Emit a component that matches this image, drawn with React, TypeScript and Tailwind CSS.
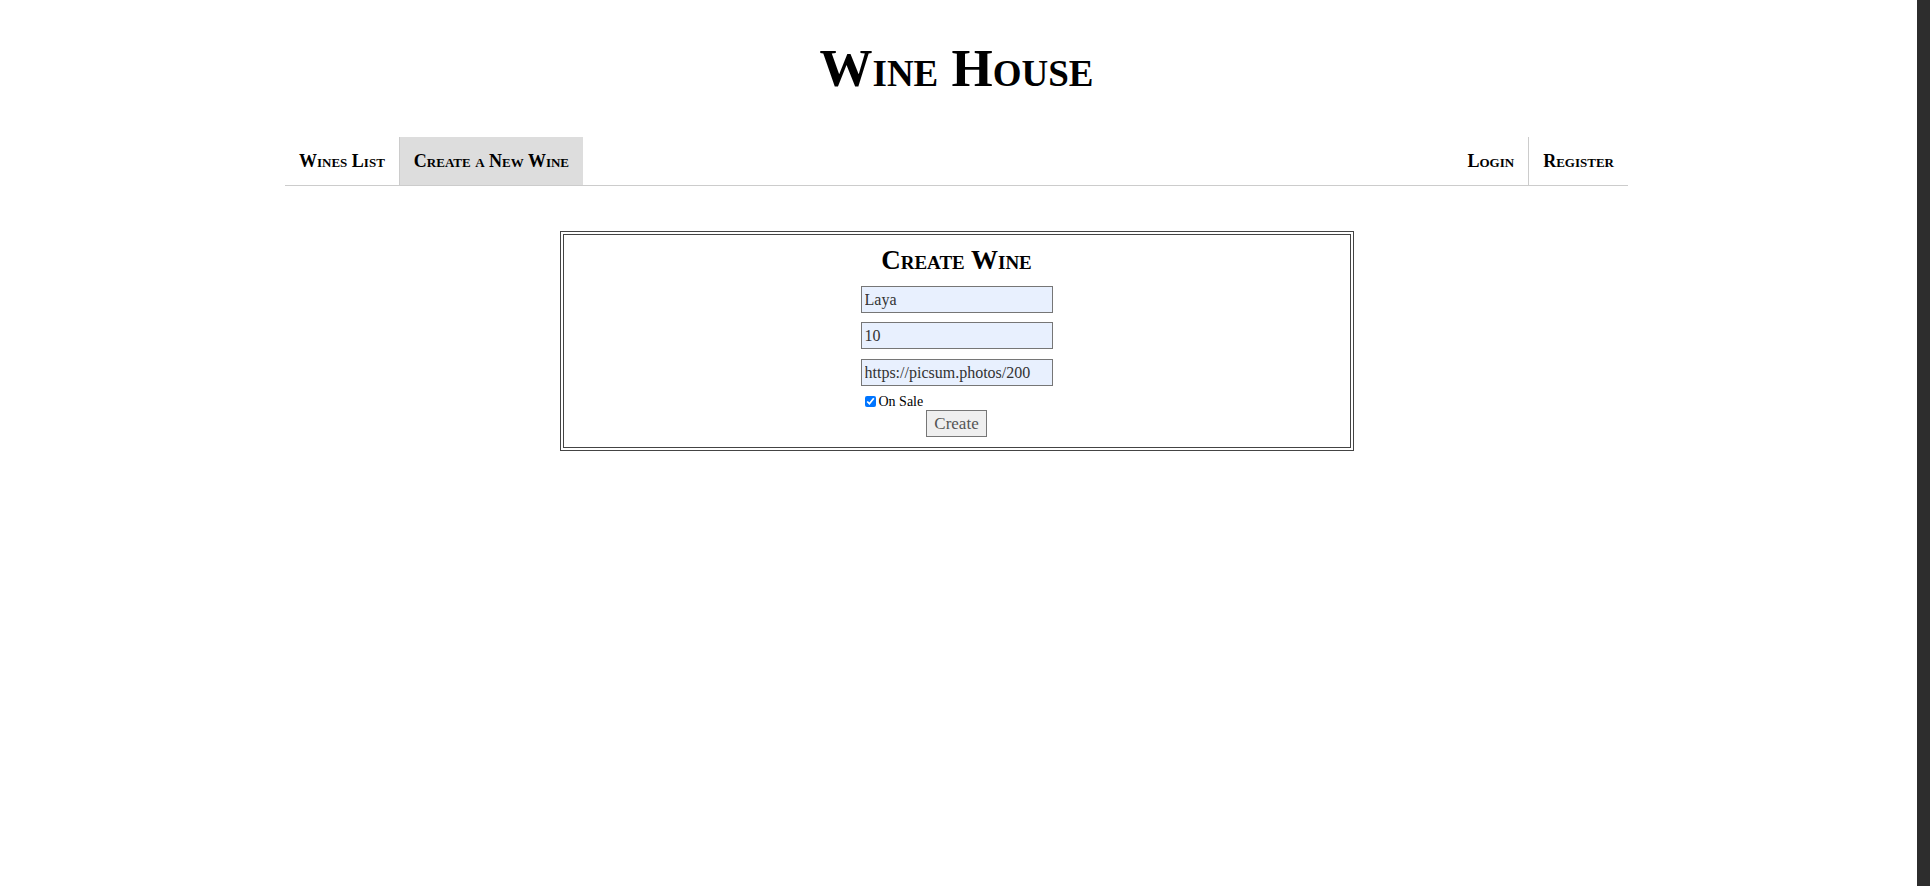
import React, { useState } from 'react';

const serif = "font-['Liberation_Serif',serif]";
const caps = '[font-variant:small-caps]';

const NavLink = ({ label, active = false, divider = false }: { label: string; active?: boolean; divider?: boolean }) => (
  <li
    className={`h-[48px] px-[14px] flex items-center text-[18px] font-bold text-black ${caps} ${active ? 'bg-[#dddddd]' : ''} ${divider ? 'border-l border-[#cccccc]' : ''}`}
  >
    <a href="#">{label}</a>
  </li>
);

export default function App() {
  const [name, setName] = useState('Laya');
  const [price, setPrice] = useState('10');
  const [imageUrl, setImageUrl] = useState('https://picsum.photos/200');
  const [onSale, setOnSale] = useState(true);

  return (
    <div className={`flex min-h-screen bg-white ${serif}`}>
      <div className="flex-1 flex flex-col items-center pr-[4px]">
        {/* Header */}
        <h1 className={`mt-[44px] h-[48px] text-[53px] leading-[48px] font-bold text-black ${caps}`}>Wine House</h1>

        {/* Navigation */}
        <nav className="mt-[45px] w-[1343px] border-b border-[#cccccc] flex justify-between">
          <ul className="flex">
            <NavLink label="Wines List" />
            <NavLink label="Create a New Wine" active divider />
          </ul>
          <ul className="flex">
            <NavLink label="Login" />
            <NavLink label="Register" divider />
          </ul>
        </nav>

        {/* Create form */}
        <section className="mt-[45px] w-[794px] border-4 border-double border-[#444444] pt-[9px] pb-[10px] flex flex-col items-center">
          <h2 className={`text-[27px] leading-[32px] font-bold text-black ${caps}`}>Create Wine</h2>
          <form className="mt-[10px] w-[192px] flex flex-col" onSubmit={(e) => e.preventDefault()}>
            <input
              className="h-[27px] w-full border border-[#767676] bg-[#e8f0fe] px-[3px] text-[16px] text-[#333333] outline-none"
              value={name}
              onChange={(e) => setName(e.target.value)}
            />
            <input
              className="mt-[9px] h-[27px] w-full border border-[#767676] bg-[#e8f0fe] px-[3px] text-[16px] text-[#333333] outline-none"
              value={price}
              onChange={(e) => setPrice(e.target.value)}
            />
            <input
              className="mt-[10px] h-[27px] w-full border border-[#767676] bg-[#e8f0fe] px-[3px] text-[16px] text-[#333333] outline-none"
              value={imageUrl}
              onChange={(e) => setImageUrl(e.target.value)}
            />
            <label className="mt-[7px] h-[17px] flex items-center text-[14px] text-black">
              <input
                type="checkbox"
                className="ml-[4px] mr-[3px] w-[11px] h-[11px] accent-[#0075ff]"
                checked={onSale}
                onChange={(e) => setOnSale(e.target.checked)}
              />
              On Sale
            </label>
            <button
              type="submit"
              className="self-center h-[27px] w-[61px] border border-[#767676] bg-[#efefef] text-[17px] text-[#555555]"
            >
              Create
            </button>
          </form>
        </section>
      </div>
      <div className="w-[13px] bg-[#2d2d2d]" />
    </div>
  );
}
